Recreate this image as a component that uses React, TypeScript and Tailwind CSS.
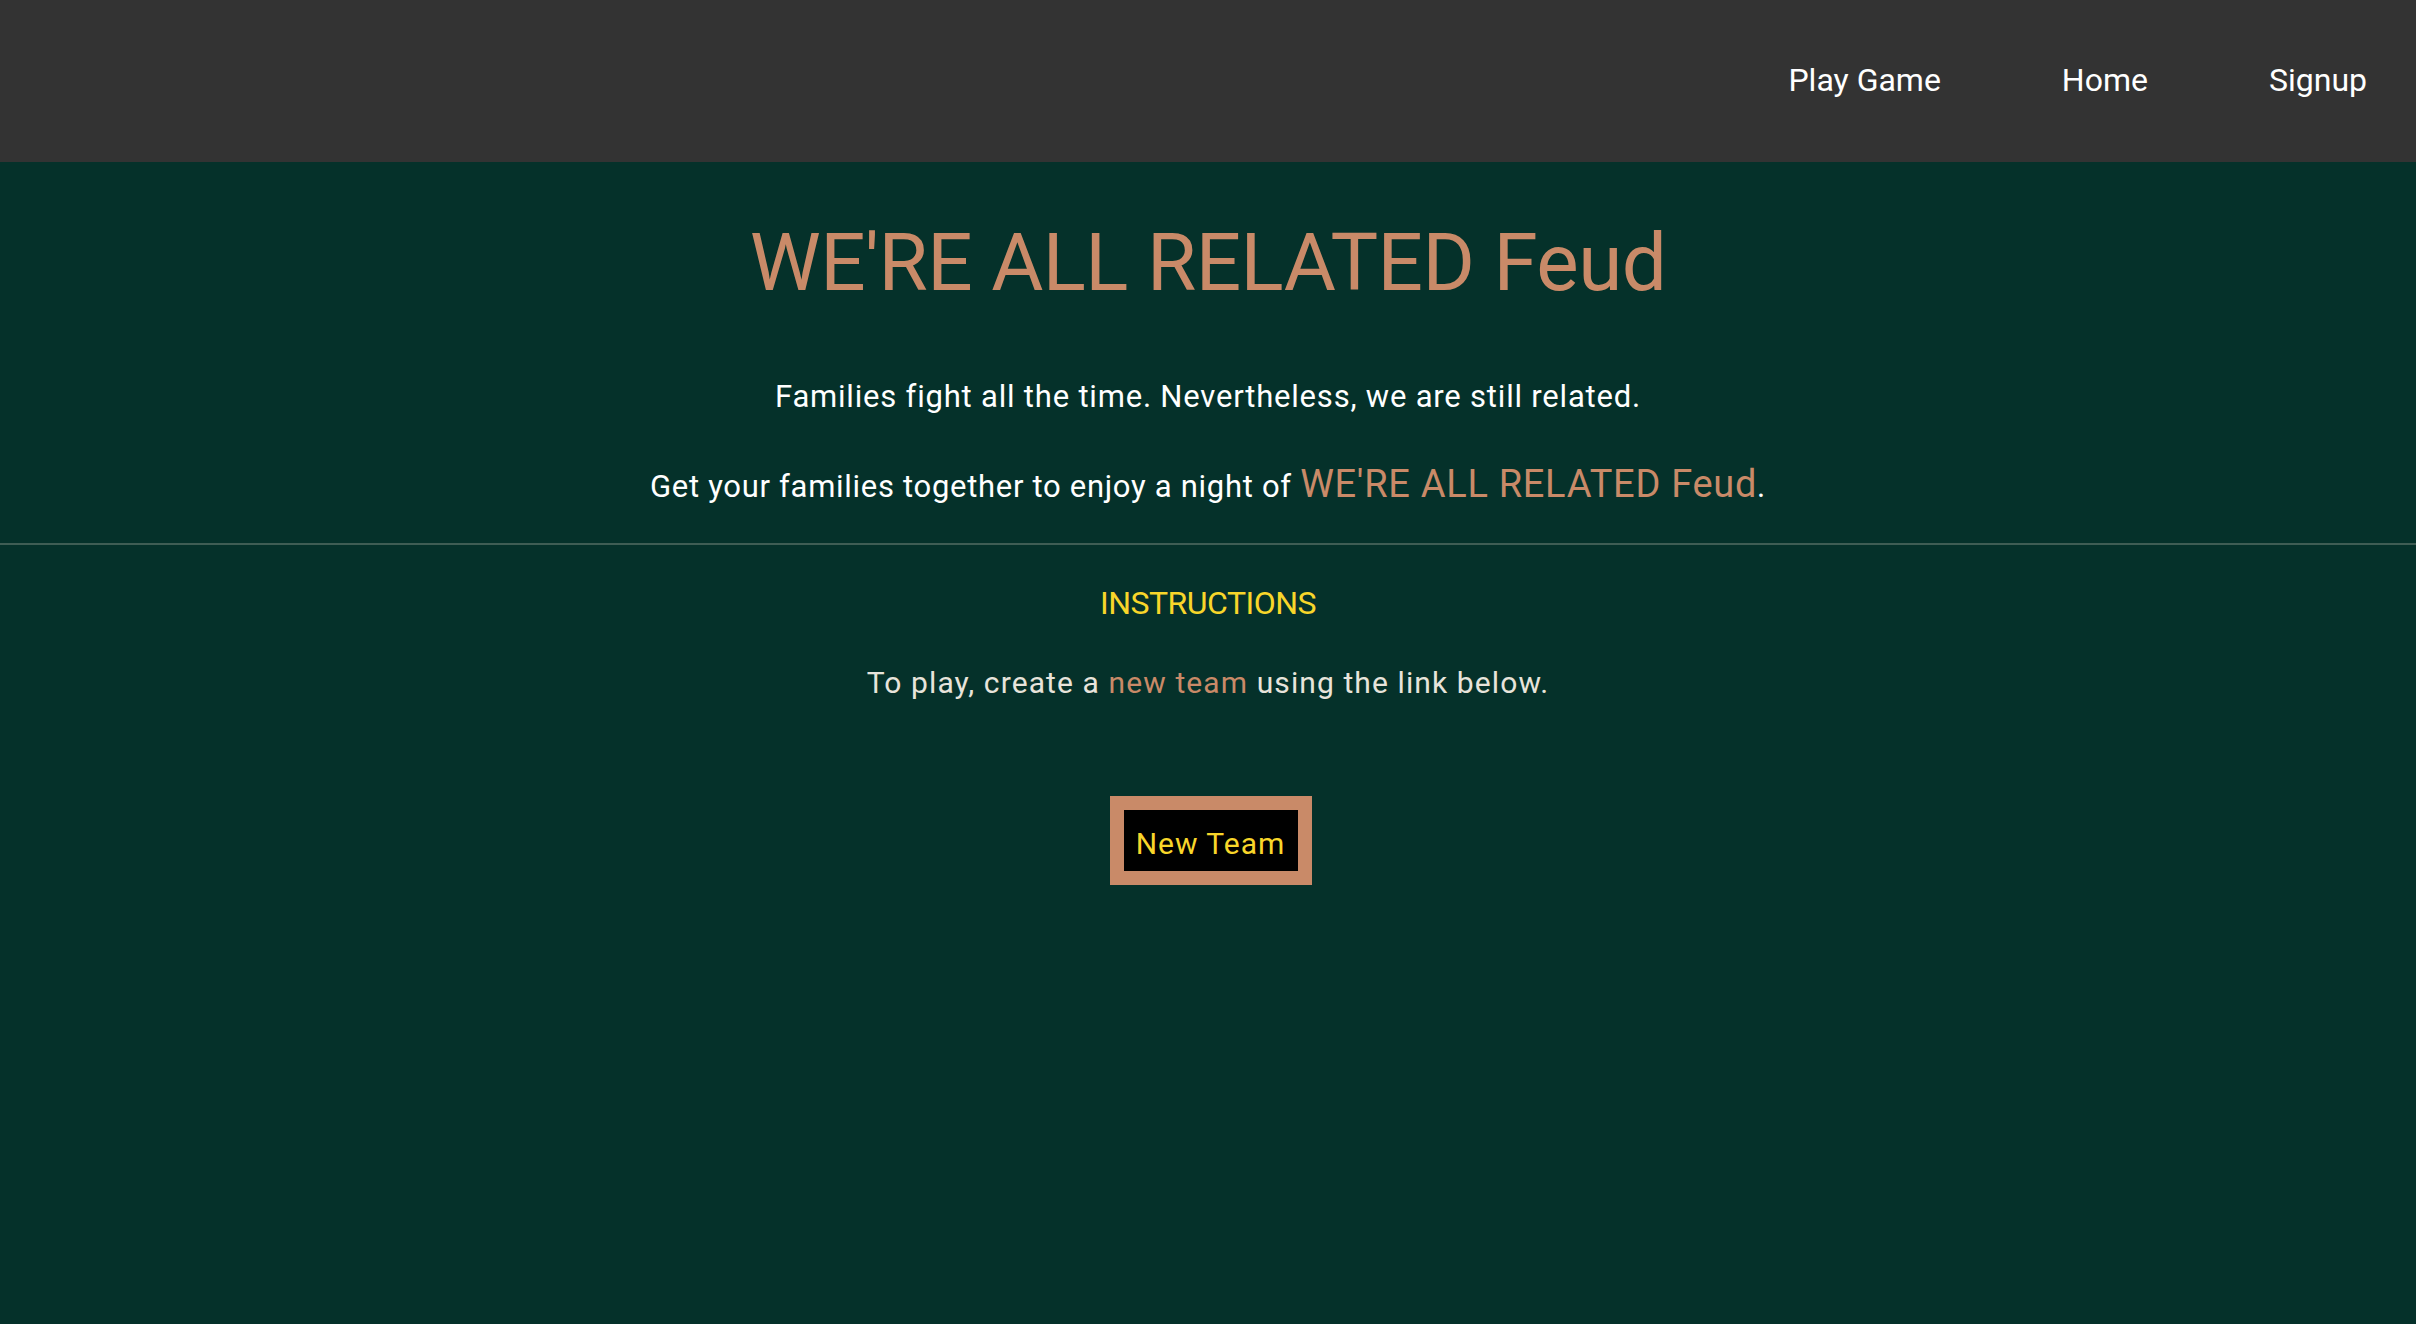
import React from "react"

const font = { fontFamily: "Roboto, 'Noto Sans', sans-serif" }

function NavBar() {
  const links = ["Play Game", "Home", "Signup"]
  return (
    <header className="h-[162px] bg-[#333333] flex items-center justify-end gap-[121px] pr-[49px] pb-[3px]">
      {links.map((l) => (
        <a key={l} href="#" className="text-white text-[32px] leading-[38px]">
          {l}
        </a>
      ))}
    </header>
  )
}

export default function App() {
  return (
    <div className="min-h-screen bg-[#05312a] flex flex-col" style={font}>
      <NavBar />
      <main className="flex flex-col items-center text-center">
        <h1 className="mt-[51px] h-[100px] leading-[100px] text-[80px] font-normal tracking-[-0.6px] text-[#c98a68]">
          WE'RE ALL RELATED Feud
        </h1>
        <p className="mt-[64px] h-[40px] leading-[40px] text-[31px] tracking-[0.8px] text-white">
          Families fight all the time. Nevertheless, we are still related.
        </p>
        <p className="mt-[45px] h-[50px] leading-[50px] text-[31px] tracking-[0.7px] text-white">
          Get your families together to enjoy a night of{" "}
          <span className="text-[38px] leading-none text-[#c98a68]">WE'RE ALL RELATED Feud</span>.
        </p>
      </main>
      <hr className="mt-[31px] w-full border-0 h-[2px] bg-[#3f5d54]" />
      <section className="flex flex-col items-center text-center">
        <h2 className="mt-[38px] h-[40px] leading-[40px] text-[32px] tracking-[-0.5px] text-[#f8d62a]">
          INSTRUCTIONS
        </h2>
        <p className="mt-[40px] h-[40px] leading-[40px] text-[30px] tracking-[1.1px] text-[#e8e4db]">
          To play, create a <span className="text-[#c98a68]">new team</span> using the link below.
        </p>
        <a
          href="#"
          className="mt-[93px] ml-[5px] w-[202px] h-[89px] border-[14px] border-[#c98a68] bg-black flex justify-center pt-[6px] text-[30px] leading-[55px] tracking-[1px] text-[#f8d62a]"
        >
          New Team
        </a>
      </section>
    </div>
  )
}
